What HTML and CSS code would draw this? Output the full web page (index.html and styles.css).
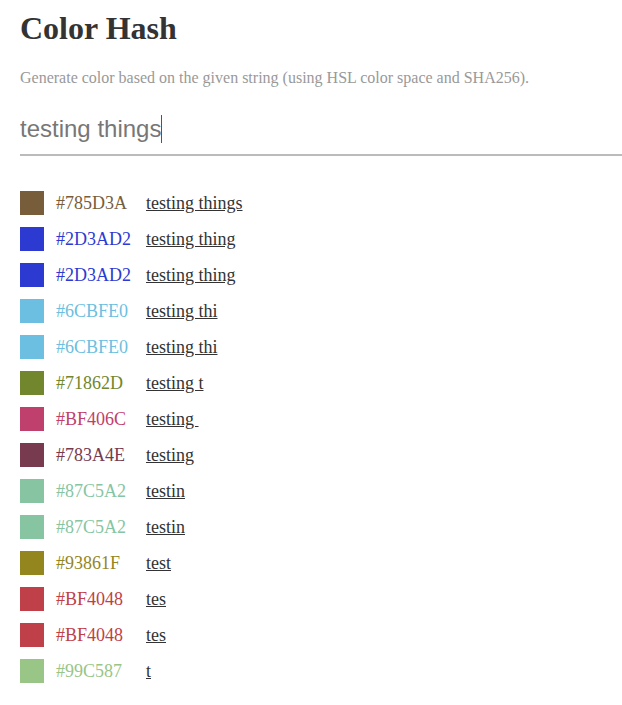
FILE: index.html
```html
<!DOCTYPE html>
<html lang="en">
<head>
<meta charset="utf-8">
<title>Color Hash</title>
<link rel="stylesheet" href="styles.css">
</head>
<body>
<main class="page">
  <h1 class="title">Color Hash</h1>
  <p class="subtitle">Generate color based on the given string (using HSL color space and SHA256).</p>
  <div class="field"><span class="field-text">testing things</span><span class="caret"></span></div>
  <ul class="list">
    <li class="row"><span class="swatch" style="background:#785D3A"></span><span class="hex" style="color:#785D3A">#785D3A</span><a class="name" href="#">testing things</a></li>
    <li class="row"><span class="swatch" style="background:#2D3AD2"></span><span class="hex" style="color:#2D3AD2">#2D3AD2</span><a class="name" href="#">testing thing</a></li>
    <li class="row"><span class="swatch" style="background:#2D3AD2"></span><span class="hex" style="color:#2D3AD2">#2D3AD2</span><a class="name" href="#">testing thing</a></li>
    <li class="row"><span class="swatch" style="background:#6CBFE0"></span><span class="hex" style="color:#6CBFE0">#6CBFE0</span><a class="name" href="#">testing thi</a></li>
    <li class="row"><span class="swatch" style="background:#6CBFE0"></span><span class="hex" style="color:#6CBFE0">#6CBFE0</span><a class="name" href="#">testing thi</a></li>
    <li class="row"><span class="swatch" style="background:#71862D"></span><span class="hex" style="color:#71862D">#71862D</span><a class="name" href="#">testing t</a></li>
    <li class="row"><span class="swatch" style="background:#BF406C"></span><span class="hex" style="color:#BF406C">#BF406C</span><a class="name" href="#">testing </a></li>
    <li class="row"><span class="swatch" style="background:#783A4E"></span><span class="hex" style="color:#783A4E">#783A4E</span><a class="name" href="#">testing</a></li>
    <li class="row"><span class="swatch" style="background:#87C5A2"></span><span class="hex" style="color:#87C5A2">#87C5A2</span><a class="name" href="#">testin</a></li>
    <li class="row"><span class="swatch" style="background:#87C5A2"></span><span class="hex" style="color:#87C5A2">#87C5A2</span><a class="name" href="#">testin</a></li>
    <li class="row"><span class="swatch" style="background:#93861F"></span><span class="hex" style="color:#93861F">#93861F</span><a class="name" href="#">test</a></li>
    <li class="row"><span class="swatch" style="background:#BF4048"></span><span class="hex" style="color:#BF4048">#BF4048</span><a class="name" href="#">tes</a></li>
    <li class="row"><span class="swatch" style="background:#BF4048"></span><span class="hex" style="color:#BF4048">#BF4048</span><a class="name" href="#">tes</a></li>
    <li class="row"><span class="swatch" style="background:#99C587"></span><span class="hex" style="color:#99C587">#99C587</span><a class="name" href="#">t</a></li>
  </ul>
</main>
</body>
</html>
```
FILE: styles.css
```css
html, body {
  margin: 0;
  padding: 0;
  background: #fff;
}
body {
  font-family: "Liberation Serif", "Times New Roman", serif;
  color: #333;
}
.page {
  padding: 0 0 0 20px;
}
.title {
  margin: 0;
  padding-top: 10px;
  font-size: 32px;
  line-height: 37px;
  font-weight: bold;
  color: #333;
}
.subtitle {
  margin: 22px 0 0;
  font-size: 16px;
  line-height: 18px;
  color: #999;
}
.field {
  margin-top: 22px;
  height: 40px;
  padding-bottom: 5px;
  border-bottom: 2px solid #bbb;
  display: flex;
  align-items: center;
  font-family: "Liberation Sans", Arial, sans-serif;
  font-size: 24px;
  color: #777;
}
.field-text {
  white-space: pre;
}
.caret {
  display: inline-block;
  width: 1px;
  height: 28px;
  background: #555;
}
.list {
  list-style: none;
  margin: 35px 0 0;
  padding: 0;
  display: flex;
  flex-direction: column;
  gap: 12px;
}
.row {
  display: flex;
  align-items: center;
  height: 24px;
  font-size: 18px;
}
.swatch {
  width: 24px;
  height: 24px;
  flex: none;
}
.hex {
  width: 90px;
  margin-left: 12px;
  flex: none;
}
.name {
  color: #333;
  text-decoration: underline;
  white-space: pre;
}
```
